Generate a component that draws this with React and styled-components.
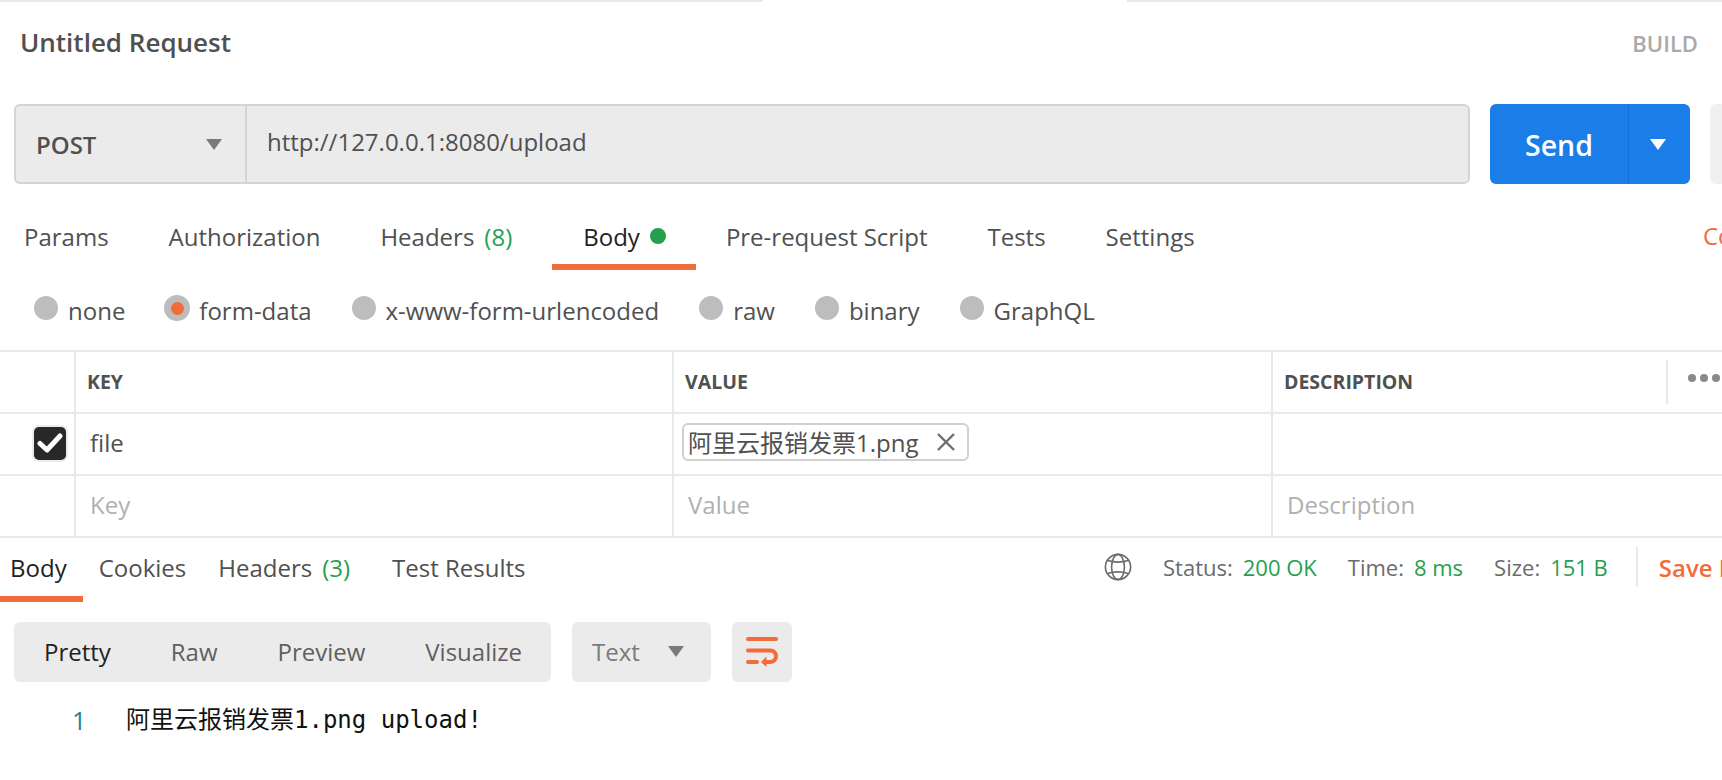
import React from "react";
import styled, { createGlobalStyle } from "styled-components";

const Global = createGlobalStyle`
  html, body {
    margin: 0;
    padding: 0;
    background: #fff;
    overflow: hidden;
  }
  * { box-sizing: border-box; }
`;

const orange = "#f26b3a";
const green = "#26a04e";
const textGrey = "#505050";
const fill = "#ebebeb";
const line = "#e9e9e9";

const Page = styled.div`
  width: 1722px;
  height: 780px;
  overflow: hidden;
  background: #fff;
  display: flex;
  flex-direction: column;
  font-family: "Open Sans", "Noto Sans CJK SC", sans-serif;
  color: ${textGrey};
`;

const TopStrip = styled.div`
  display: flex;
  height: 2px;
  flex-shrink: 0;
`;

const StripPart = styled.div`
  background: ${(p) => (p.$blank ? "#fff" : line)};
  width: ${(p) => p.$width}px;
  flex-grow: ${(p) => (p.$width ? 0 : 1)};
`;

const Header = styled.div`
  height: 82px;
  margin-bottom: 20px;
  padding: 0 24px 0 20px;
  display: flex;
  align-items: center;
  justify-content: space-between;
  flex-shrink: 0;
`;

const Title = styled.div`
  font-size: 26px;
  font-weight: 600;
  color: #505050;
  margin-top: -2px;
`;

const Build = styled.div`
  font-size: 22px;
  font-weight: 600;
  color: #a9a9a9;
`;

const RequestRow = styled.div`
  display: flex;
  height: 80px;
  padding-left: 14px;
  flex-shrink: 0;
`;

const UrlBar = styled.div`
  width: 1456px;
  flex-shrink: 0;
  display: flex;
  background: ${fill};
  border: 2px solid #d4d4d4;
  border-radius: 6px;
`;

const Method = styled.div`
  width: 231px;
  border-right: 2px solid #d4d4d4;
  padding: 0 23px 0 20px;
  display: flex;
  align-items: center;
  justify-content: space-between;
  font-size: 24px;
  font-weight: 600;
`;

const Caret = styled.span`
  display: block;
  width: 0;
  height: 0;
  border-left: 8px solid transparent;
  border-right: 8px solid transparent;
  border-top: 11px solid ${(p) => p.$color || "#7a7a7a"};
`;

const UrlText = styled.div`
  padding-left: 20px;
  display: flex;
  align-items: center;
  font-size: 24px;
  padding-bottom: 6px;
  color: #505050;
`;

const SendGroup = styled.div`
  width: 200px;
  margin-left: 20px;
  display: flex;
  background: #1a7de8;
  border-radius: 6px;
  flex-shrink: 0;
`;

const SendLabel = styled.div`
  width: 139px;
  padding-left: 35px;
  padding-top: 2px;
  display: flex;
  align-items: center;
  border-right: 1px solid #1470d6;
  color: #fff;
  font-size: 28.5px;
  font-weight: 600;
`;

const SendCaret = styled.div`
  flex: 1;
  padding-right: 3px;
  display: flex;
  align-items: center;
  justify-content: center;
`;

const NextButton = styled.div`
  width: 60px;
  margin-left: 20px;
  background: #f0f0f0;
  border-radius: 6px;
  flex-shrink: 0;
`;

const RequestTabs = styled.div`
  display: flex;
  margin-top: 28px;
  margin-left: -6px;
  flex-shrink: 0;
`;

const Tab = styled.div`
  display: flex;
  align-items: center;
  white-space: nowrap;
  height: ${(p) => p.$height}px;
  padding: 0 ${(p) => p.$right ?? p.$pad}px ${(p) => p.$bottom || 0}px ${(p) => p.$pad}px;
  margin-left: ${(p) => p.$shift || 0}px;
  font-size: 24px;
  color: ${(p) => (p.$active ? "#222" : textGrey)};
  border-bottom: 6px solid ${(p) => (p.$active ? orange : "transparent")};
`;

const Count = styled.span`
  color: ${green};
  margin-left: 10px;
`;

const BodyDot = styled.span`
  width: 16px;
  height: 16px;
  margin-left: 10px;
  border-radius: 50%;
  background: ${green};
`;

const CookiesLink = styled.div`
  margin-left: auto;
  width: 19px;
  overflow: hidden;
  font-size: 24px;
  line-height: 48px;
  color: ${orange};
  white-space: nowrap;
`;

const RadioRow = styled.div`
  height: 80px;
  padding-left: 34px;
  display: flex;
  align-items: center;
  gap: 40px;
  flex-shrink: 0;
`;

const RadioItem = styled.div`
  display: flex;
  align-items: center;
  gap: 10px;
  font-size: 24px;
`;

const Radio = styled.span`
  width: 24px;
  height: 24px;
  border-radius: 50%;
  background: #bdbdbd;
  box-shadow: ${(p) => (p.$on ? "0 0 0 1px #bdbdbd" : "none")};
  display: flex;
  align-items: center;
  justify-content: center;
  margin-top: -4px;
  &::after {
    content: "";
    display: ${(p) => (p.$on ? "block" : "none")};
    width: 13px;
    height: 13px;
    border-radius: 50%;
    background: ${orange};
  }
`;

const Table = styled.div`
  display: grid;
  grid-template-columns: 76px 598px 599px 1fr;
  border-top: 2px solid ${line};
  flex-shrink: 0;
`;

const Cell = styled.div`
  height: 62px;
  padding: 0 0 ${(p) => p.$bottom ?? 4}px ${(p) => p.$pad || 14}px;
  display: flex;
  align-items: center;
  border-bottom: 2px solid ${line};
  border-right: ${(p) => (p.$last ? "none" : `2px solid ${line}`)};
  font-size: 24px;
  color: ${(p) => (p.$hint ? "#b0b0b0" : textGrey)};
  position: relative;
`;

const HeadCell = styled(Cell)`
  font-size: 19.5px;
  font-weight: 700;
  padding-left: ${(p) => p.$pad || 11}px;
`;

const CheckBox = styled.span`
  width: 32px;
  height: 33px;
  margin-left: 33px;
  margin-top: 2px;
  border-radius: 5px;
  background: #282828;
  box-shadow: 0 0 0 2px #ececec;
  display: flex;
  align-items: center;
  justify-content: center;
`;

const FileChip = styled.div`
  width: 287px;
  height: 38px;
  margin-left: 7px;
  padding: 0 11px 0 4px;
  display: flex;
  align-items: center;
  justify-content: space-between;
  border: 2px solid #d0d0d0;
  border-radius: 6px;
  font-size: 24px;
  white-space: nowrap;
`;

const ChipLabel = styled.span`
  position: relative;
  top: -1px;
`;

const RowTools = styled.div`
  position: absolute;
  right: 0;
  top: 8px;
  width: 56px;
  height: 44px;
  border-left: 2px solid ${line};
  display: flex;
  align-items: center;
  gap: 4px;
  padding: 0 0 8px 20px;
`;

const ToolDot = styled.span`
  width: 8px;
  height: 8px;
  flex-shrink: 0;
  border-radius: 50%;
  background: #8a8a8a;
`;

const ResponseBar = styled.div`
  display: flex;
  justify-content: space-between;
  flex-shrink: 0;
`;

const ResponseTabs = styled.div`
  display: flex;
`;

const Meta = styled.div`
  width: 618px;
  overflow: hidden;
  display: flex;
  align-items: center;
  font-size: 22px;
  white-space: nowrap;
  padding-bottom: 6px;
`;

const Globe = styled.svg`
  width: 28px;
  height: 28px;
  margin-right: 31px;
  flex-shrink: 0;
`;

const MetaLabel = styled.span`
  color: #6b6b6b;
  margin-right: 10px;
`;

const MetaValue = styled.span`
  color: ${green};
  margin-right: 31px;
`;

const SaveSplit = styled.div`
  height: 40px;
  margin-left: -3px;
  border-left: 2px solid ${line};
  padding-left: 21px;
  display: flex;
  align-items: center;
  color: ${orange};
  font-size: 24px;
  font-weight: 600;
`;

const Toolbar = styled.div`
  display: flex;
  height: 60px;
  margin-top: 20px;
  padding-left: 14px;
  gap: 21px;
  flex-shrink: 0;
`;

const ViewGroup = styled.div`
  width: 537px;
  padding: 0 29px 2px 30px;
  display: flex;
  align-items: center;
  justify-content: space-between;
  background: ${fill};
  border-radius: 6px;
  font-size: 24px;
`;

const ViewItem = styled.span`
  color: ${(p) => (p.$active ? "#222" : "#5f5f5f")};
`;

const TypeSelect = styled.div`
  width: 139px;
  padding: 0 27px 2px 20px;
  display: flex;
  align-items: center;
  justify-content: space-between;
  background: ${fill};
  border-radius: 6px;
  font-size: 24px;
  color: #7a7a7a;
`;

const WrapButton = styled.div`
  width: 60px;
  display: flex;
  align-items: center;
  justify-content: center;
  background: ${fill};
  border-radius: 6px;
`;

const CodeLine = styled.div`
  display: flex;
  margin-top: 20px;
  padding-left: 72px;
  line-height: 36px;
  font-size: 24px;
  font-family: "DejaVu Sans Mono", "Noto Sans CJK SC", monospace;
  color: #111;
`;

const LineNumber = styled.span`
  width: 54px;
  color: #2a7d9c;
  font-family: "Open Sans", sans-serif;
  font-size: 25px;
`;

const tabs = ["Params", "Authorization"];
const tailTabs = ["Pre-request Script", "Tests", "Settings"];
const bodyTypes = ["none", "form-data", "x-www-form-urlencoded", "raw", "binary", "GraphQL"];
const views = ["Pretty", "Raw", "Preview", "Visualize"];

const App = () => {
  return (
    <Page>
      <Global />
      <TopStrip>
        <StripPart $width={763} />
        <StripPart $width={364} $blank />
        <StripPart />
      </TopStrip>

      <Header>
        <Title>Untitled Request</Title>
        <Build>BUILD</Build>
      </Header>

      <RequestRow>
        <UrlBar>
          <Method>
            POST
            <Caret />
          </Method>
          <UrlText>http://127.0.0.1:8080/upload</UrlText>
        </UrlBar>
        <SendGroup>
          <SendLabel>Send</SendLabel>
          <SendCaret>
            <Caret $color="#fff" />
          </SendCaret>
        </SendGroup>
        <NextButton />
      </RequestRow>

      <RequestTabs>
        {tabs.map((t) => (
          <Tab key={t} $height={58} $pad={30} $bottom={4}>{t}</Tab>
        ))}
        <Tab $height={58} $pad={30} $bottom={4}>
          Headers<Count>(8)</Count>
        </Tab>
        <Tab $height={58} $pad={31} $right={30} $shift={10} $bottom={4} $active>
          Body<BodyDot />
        </Tab>
        {tailTabs.map((t) => (
          <Tab key={t} $height={58} $pad={30} $bottom={4}>{t}</Tab>
        ))}
        <CookiesLink>Cookies</CookiesLink>
      </RequestTabs>

      <RadioRow>
        {bodyTypes.map((t) => (
          <RadioItem key={t}>
            <Radio $on={t === "form-data"} />
            {t}
          </RadioItem>
        ))}
      </RadioRow>

      <Table>
        <HeadCell />
        <HeadCell $bottom={2}>KEY</HeadCell>
        <HeadCell $bottom={2}>VALUE</HeadCell>
        <HeadCell $bottom={2} $last>
          DESCRIPTION
          <RowTools>
            <ToolDot />
            <ToolDot />
            <ToolDot />
          </RowTools>
        </HeadCell>

        <Cell $pad={1}>
          <CheckBox>
            <svg width="26" height="22" viewBox="0 0 26 22">
              <path d="M3 11.5 L10 18 L23 4" fill="none" stroke="#fff" strokeWidth="5" strokeLinecap="round" strokeLinejoin="round" />
            </svg>
          </CheckBox>
        </Cell>
        <Cell>file</Cell>
        <Cell $pad={1}>
          <FileChip>
            <ChipLabel>阿里云报销发票1.png</ChipLabel>
            <svg width="20" height="20" viewBox="0 0 20 20">
              <path d="M2 2 L18 18 M18 2 L2 18" stroke="#6e6e6e" strokeWidth="2.4" />
            </svg>
          </FileChip>
        </Cell>
        <Cell $last />

        <Cell />
        <Cell $hint>Key</Cell>
        <Cell $hint>Value</Cell>
        <Cell $hint $last>Description</Cell>
      </Table>

      <ResponseBar>
        <ResponseTabs>
          <Tab $height={64} $pad={16} $shift={-6} $active>Body</Tab>
          <Tab $height={64} $pad={16}>Cookies</Tab>
          <Tab $height={64} $pad={16}>
            Headers<Count>(3)</Count>
          </Tab>
          <Tab $height={64} $pad={16} $shift={10}>Test Results</Tab>
        </ResponseTabs>
        <Meta>
          <Globe viewBox="0 0 28 28" fill="none" stroke="#6b6b6b" strokeWidth="1.6">
            <circle cx="14" cy="14" r="12.6" />
            <ellipse cx="14" cy="14" rx="6.4" ry="12.6" />
            <path d="M3.6 7.6 Q14 10.6 24.4 7.6 M3.6 20.4 Q14 17.4 24.4 20.4" />
          </Globe>
          <MetaLabel>Status:</MetaLabel>
          <MetaValue>200 OK</MetaValue>
          <MetaLabel>Time:</MetaLabel>
          <MetaValue>8 ms</MetaValue>
          <MetaLabel>Size:</MetaLabel>
          <MetaValue>151 B</MetaValue>
          <SaveSplit>Save Response</SaveSplit>
        </Meta>
      </ResponseBar>

      <Toolbar>
        <ViewGroup>
          {views.map((v) => (
            <ViewItem key={v} $active={v === "Pretty"}>{v}</ViewItem>
          ))}
        </ViewGroup>
        <TypeSelect>
          Text
          <Caret />
        </TypeSelect>
        <WrapButton>
          <svg width="34" height="32" viewBox="0 0 34 32" fill="none" stroke={orange} strokeWidth="4" strokeLinecap="round">
            <path d="M3 3 H31" />
            <path d="M3 14.5 H25 C29 14.5 31 17 31 20 C31 23.5 28.5 26 25 26 H19" />
            <path d="M3 26 H12" />
            <path d="M21.5 20.5 L16 26 L21.5 31" fill={orange} stroke="none" />
          </svg>
        </WrapButton>
      </Toolbar>

      <CodeLine>
        <LineNumber>1</LineNumber>
        阿里云报销发票1.png upload!
      </CodeLine>
    </Page>
  );
};

export default App;
